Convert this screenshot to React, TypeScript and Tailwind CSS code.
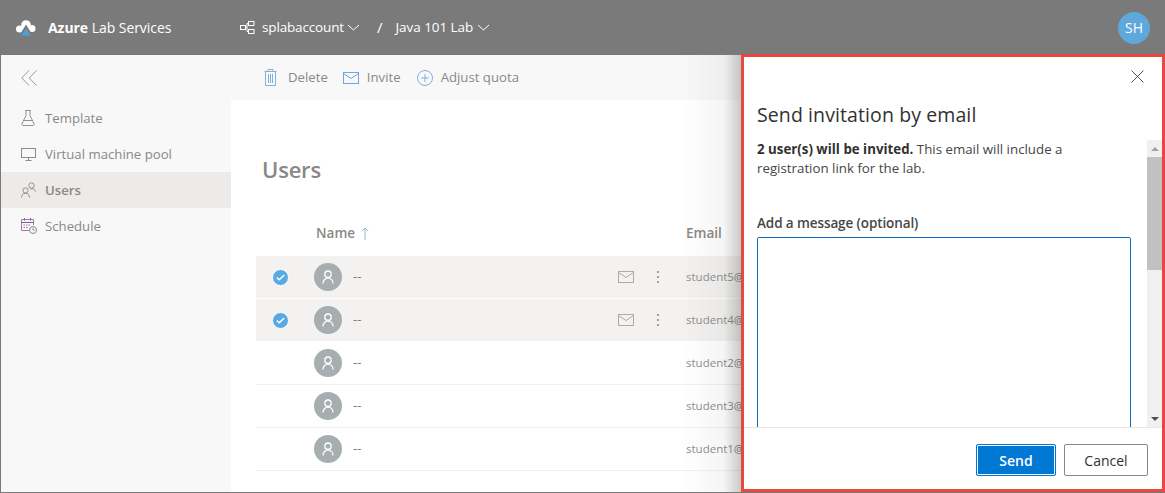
import React from "react";

const Envelope = ({ c, w = 16, h = 12 }: { c: string; w?: number; h?: number }) => (
  <svg width={w} height={h} viewBox="0 0 16 12" fill="none" stroke={c} strokeWidth="1">
    <rect x="0.5" y="0.5" width="15" height="11" />
    <path d="M0.5 1.5L8 6.5L15.5 1.5" />
  </svg>
);

const Person = () => (
  <svg width="12" height="14" viewBox="0 0 12 14" fill="none" stroke="#fff" strokeWidth="1.3">
    <circle cx="6" cy="4.2" r="3.2" />
    <path d="M1 13.5C1 10.5 3 8.2 6 8.2S11 10.500 11 13.5" />
  </svg>
);

const Row = ({ sel, email, border }: { sel?: boolean; email: string; border?: boolean }) => (
  <div className={`flex items-center h-[43px] shrink-0 ${sel ? "bg-[#f3f2f1] border-b border-white" : "bg-white"} ${border ? "border-b border-[#f1f1f1]" : ""}`}>
    <div className="w-[58px] flex justify-center pr-[10px] shrink-0">
      {sel && (
        <div className="w-[17px] h-[17px] rounded-full bg-[#5aa9e2] border border-white flex items-center justify-center">
          <svg width="9" height="7" viewBox="0 0 9 7" fill="none" stroke="#fff" strokeWidth="1.4"><path d="M0.8 3.6L3.2 5.8L8.2 1" /></svg>
        </div>
      )}
    </div>
    <div className="w-[28px] h-[28px] rounded-full bg-[#a6aeaf] flex items-center justify-center shrink-0"><Person /></div>
    <span className="ml-[11px] text-[13px] text-[#7b7b7b] w-[265px] shrink-0">--</span>
    <div className="w-[16px] shrink-0 flex">{sel && <Envelope c="#ababab" />}</div>
    <div className="w-[16px] ml-[16px] shrink-0 flex justify-center">
      {sel && (
        <div className="flex flex-col gap-[3px]">
          <i className="w-[2px] h-[2px] bg-[#a0a0a0] block" />
          <i className="w-[2px] h-[2px] bg-[#a0a0a0] block" />
          <i className="w-[2px] h-[2px] bg-[#a0a0a0] block" />
        </div>
      )}
    </div>
    <span className="ml-[20px] text-[11.5px] text-[#8f8f8f] whitespace-nowrap">{email}</span>
  </div>
);

const NavItem = ({ icon, label, active }: { icon: React.ReactNode; label: string; active?: boolean }) => (
  <div className={`h-[36px] flex items-center ${active ? "bg-[#edebe9]" : ""}`}>
    <div className="w-[44px] pl-[20px] flex shrink-0">{icon}</div>
    <span className={`mt-[2px] text-[13.2px] text-[#8a8886] ${active ? "font-semibold" : ""}`}>{label}</span>
  </div>
);

export default function App() {
  return (
    <div
      className="relative w-[1165px] h-[493px] overflow-hidden bg-white border-l border-b border-[#7a7a7a]"
      style={{ fontFamily: '"Open Sans", "Noto Sans", sans-serif' }}
    >
      {/* Header */}
      <header className="h-[55px] bg-[#7a7a7a] flex items-center text-white">
        <svg className="ml-[15px] shrink-0" width="20" height="16" viewBox="0 0 20 16">
          <circle cx="3.6" cy="9" r="3.6" fill="#fff" />
          <circle cx="10" cy="5" r="4.8" fill="#fff" />
          <circle cx="16" cy="8.5" r="3.5" fill="#fff" />
          <path d="M10 4.500L17 16H3z" fill="#7a7a7a" />
          <path d="M10 8.500L14.600 15.800H5.400z" fill="#4f9fd8" />
        </svg>
        <span className="ml-[12px] text-[14px] whitespace-nowrap w-[192px] shrink-0 tracking-[-0.05px]"><b className="font-bold">Azure</b> Lab Services</span>
        <svg className="shrink-0" width="15" height="14" viewBox="0 0 15 14" fill="none" stroke="#fff" strokeWidth="1">
          <rect x="0.5" y="4.5" width="5" height="4" />
          <rect x="8.5" y="0.5" width="5.5" height="4" />
          <rect x="8.5" y="8.5" width="5.5" height="4" />
          <path d="M5.5 6.5H7V2.5H8.5M7 6.5V10.5H8.5" />
        </svg>
        <span className="ml-[7px] text-[13.5px] whitespace-nowrap tracking-[-0.15px]">splabaccount</span>
        <svg className="ml-[3px] shrink-0" width="13" height="7" viewBox="0 0 13 7" fill="none" stroke="#fff"><path d="M1 1L6.5 6L12 1" /></svg>
        <span className="ml-[17px] text-[15px]">/</span>
        <span className="ml-[13px] text-[13.5px] whitespace-nowrap tracking-[-0.05px]">Java 101 Lab</span>
        <svg className="ml-[4px] shrink-0" width="13" height="7" viewBox="0 0 13 7" fill="none" stroke="#fff"><path d="M1 1L6.5 6L12 1" /></svg>
        <div className="ml-auto mr-[15px] w-[32px] h-[32px] rounded-full bg-[#5fa8db] flex items-center justify-center text-[14px]">SH</div>
      </header>

      <div className="flex h-[437px]">
        {/* Sidebar */}
        <aside className="w-[230px] shrink-0 bg-[#f8f8f8] flex flex-col">
          <div className="h-[45px] flex items-center pl-[20px]">
            <svg width="16" height="16" viewBox="0 0 16 16" fill="none" stroke="#9a9a9a" strokeWidth="1">
              <path d="M8 .5L.8 8L8 15.5M15.5 .5L8.3 8L15.5 15.5" />
            </svg>
          </div>
          <nav className="flex flex-col">
            <NavItem
              label="Template"
              icon={
                <svg width="14" height="16" viewBox="0 0 14 16" fill="none" stroke="#9a8f96" strokeWidth="1">
                  <path d="M4 .5h6M5 .5v5L.8 14a1 1 0 0 0 .9 1.5h10.6a1 1 0 0 0 .9-1.5L9 5.5v-5M3 10.5h8" />
                </svg>
              }
            />
            <NavItem
              label="Virtual machine pool"
              icon={
                <svg width="15" height="13" viewBox="0 0 15 13" fill="none" stroke="#8e8a90" strokeWidth="1">
                  <rect x="0.5" y="0.5" width="14" height="9" />
                  <path d="M7.5 9.5v3M4.5 12.5h6" />
                </svg>
              }
            />
            <NavItem
              active
              label="Users"
              icon={
                <svg width="15" height="16" viewBox="0 0 15 16" fill="none" stroke="#96908f" strokeWidth="1">
                  <circle cx="10.5" cy="3.5" r="2.7" />
                  <circle cx="4.5" cy="8.5" r="2.6" />
                  <path d="M.5 15.5c0-2.500 1.500-4.200 4-4.200s4 1.700 4 4.200M9 7.500c.5-.5 1-.8 1.800-.8 2 0 3.500 1 3.700 3" />
                </svg>
              }
            />
            <NavItem
              label="Schedule"
              icon={
                <svg width="16" height="16" viewBox="0 0 16 16" fill="none" stroke="#a878a8" strokeWidth="1">
                  <path d="M8 12.500H.5V1.500h12V7" />
                  <path d="M.5 4.500h12M3.500 0v2.500M9.500 0v2.500" stroke="#8e5a9e" />
                  <path d="M2.500 7h7M2.500 9.500h5" strokeDasharray="1.500 1" />
                  <circle cx="12" cy="12" r="3.500" stroke="#8a8a8a" />
                  <path d="M12 10v2h1.500" stroke="#8a8a8a" />
                </svg>
              }
            />
          </nav>
        </aside>

        {/* Main */}
        <main className="flex-1 flex flex-col min-w-0">
          <div className="h-[45px] bg-[#f8f8f8] flex items-center pl-[33px] text-[13.2px] text-[#8a8886] shrink-0">
            <svg width="13" height="17" viewBox="0 0 13 17" fill="none" stroke="#7fb1df" strokeWidth="1">
              <path d="M.5 2.500h12M4 2.500V.5h5v2M1.500 2.500v14h10v-14M4.500 5v9M6.500 5v9M8.500 5v9" />
            </svg>
            <span className="ml-[11px]">Delete</span>
            <span className="ml-[15px] flex"><Envelope c="#6fa8df" /></span>
            <span className="ml-[8px]">Invite</span>
            <svg className="ml-[16px]" width="16" height="16" viewBox="0 0 16 16" fill="none" stroke="#7fb1df" strokeWidth="1">
              <circle cx="8" cy="8" r="7.500" />
              <path d="M8 4v8M4 8h8" />
            </svg>
            <span className="ml-[8px]">Adjust quota</span>
          </div>
          <div className="flex-1 pl-[25px] flex flex-col min-h-0">
            <h1 className="ml-[6px] mt-[53px] h-[33px] text-[22px] leading-[33px] font-semibold tracking-[-0.2px] text-[#8a8886]">Users</h1>
            <div className="mt-[25px] h-[45px] flex items-center text-[13.5px] font-semibold text-[#8a8886] shrink-0">
              <span className="ml-[60px]">Name</span>
              <svg className="ml-[6px]" width="8" height="13" viewBox="0 0 8 13" fill="none" stroke="#8fc0cf"><path d="M4 13V1M.8 4.200L4 1l3.200 3.200" /></svg>
              <span className="ml-[317px]">Email</span>
            </div>
            <div className="flex flex-col">
              <Row sel email="student5@contoso.com" />
              <Row sel email="student4@contoso.com" />
              <Row email="student2@contoso.com" border />
              <Row email="student3@contoso.com" border />
              <Row email="student1@contoso.com" border />
            </div>
          </div>
        </main>
      </div>

      {/* Side panel overlay */}
      <div className="absolute left-[680px] top-[55px] w-[61px] h-[437px] bg-gradient-to-r from-transparent via-[#0000000a] via-70% to-[#00000038]" />
      <aside className="absolute left-[740px] top-[54px] w-[424px] h-[438px] bg-white border-[3px] border-[#e8483f] flex flex-col text-[#323130]">
        <div className="h-[43px] flex justify-end items-start pt-[13px] pr-[18px] shrink-0">
          <svg width="13" height="13" viewBox="0 0 13 13" fill="none" stroke="#555" strokeWidth="1"><path d="M.5.5l12 12M12.500.5l-12 12" /></svg>
        </div>
        <h2 className="ml-[13px] h-[30px] text-[19.5px] leading-[30px] font-medium tracking-[0.1px] shrink-0">Send invitation by email</h2>
        <div className="flex-1 min-h-0 flex mt-[10px] overflow-hidden">
          <div className="flex-1 pl-[13px] pr-[16px] min-w-0 overflow-hidden">
            <p className="text-[13.3px] leading-[19px] max-w-[320px] text-[#484644]">
              <b className="font-bold text-[#323130]">2 user(s) will be invited.</b> This email will include a registration link for the lab.
            </p>
            <div className="mt-[34px] h-[22px] text-[13.5px] leading-[22px] font-semibold tracking-[-0.1px] text-[#484644]">Add a message (optional)</div>
            <div className="mt-[3px] h-[220px] border border-[#106ebe] rounded-t-[2px]" />
          </div>
          <div className="w-[15px] bg-[#f0f0f0] shrink-0 flex flex-col items-center">
            <div className="h-[17px] flex items-center justify-center shrink-0">
              <div className="w-0 h-0 border-x-[4px] border-x-transparent border-b-[4px] border-b-[#a3a3a3]" />
            </div>
            <div className="w-full h-[113px] bg-[#c1c1c1]" />
            <div className="mt-auto h-[17px] flex items-center justify-center shrink-0">
              <div className="w-0 h-0 border-x-[4px] border-x-transparent border-t-[4px] border-t-[#505050]" />
            </div>
          </div>
        </div>
        <div className="h-[62px] border-t border-[#e6e6e6] flex items-start justify-end pt-[16px] pr-[14px] gap-[8px] shrink-0">
          <button className="w-[80px] h-[32px] rounded-[2px] bg-[#0078d4] border border-[#0078d4] outline outline-1 outline-white -outline-offset-2 text-white text-[14px] font-semibold">Send</button>
          <button className="w-[84px] h-[32px] rounded-[2px] bg-white border border-[#8a8886] text-[#323130] text-[14px]">Cancel</button>
        </div>
      </aside>
    </div>
  );
}
